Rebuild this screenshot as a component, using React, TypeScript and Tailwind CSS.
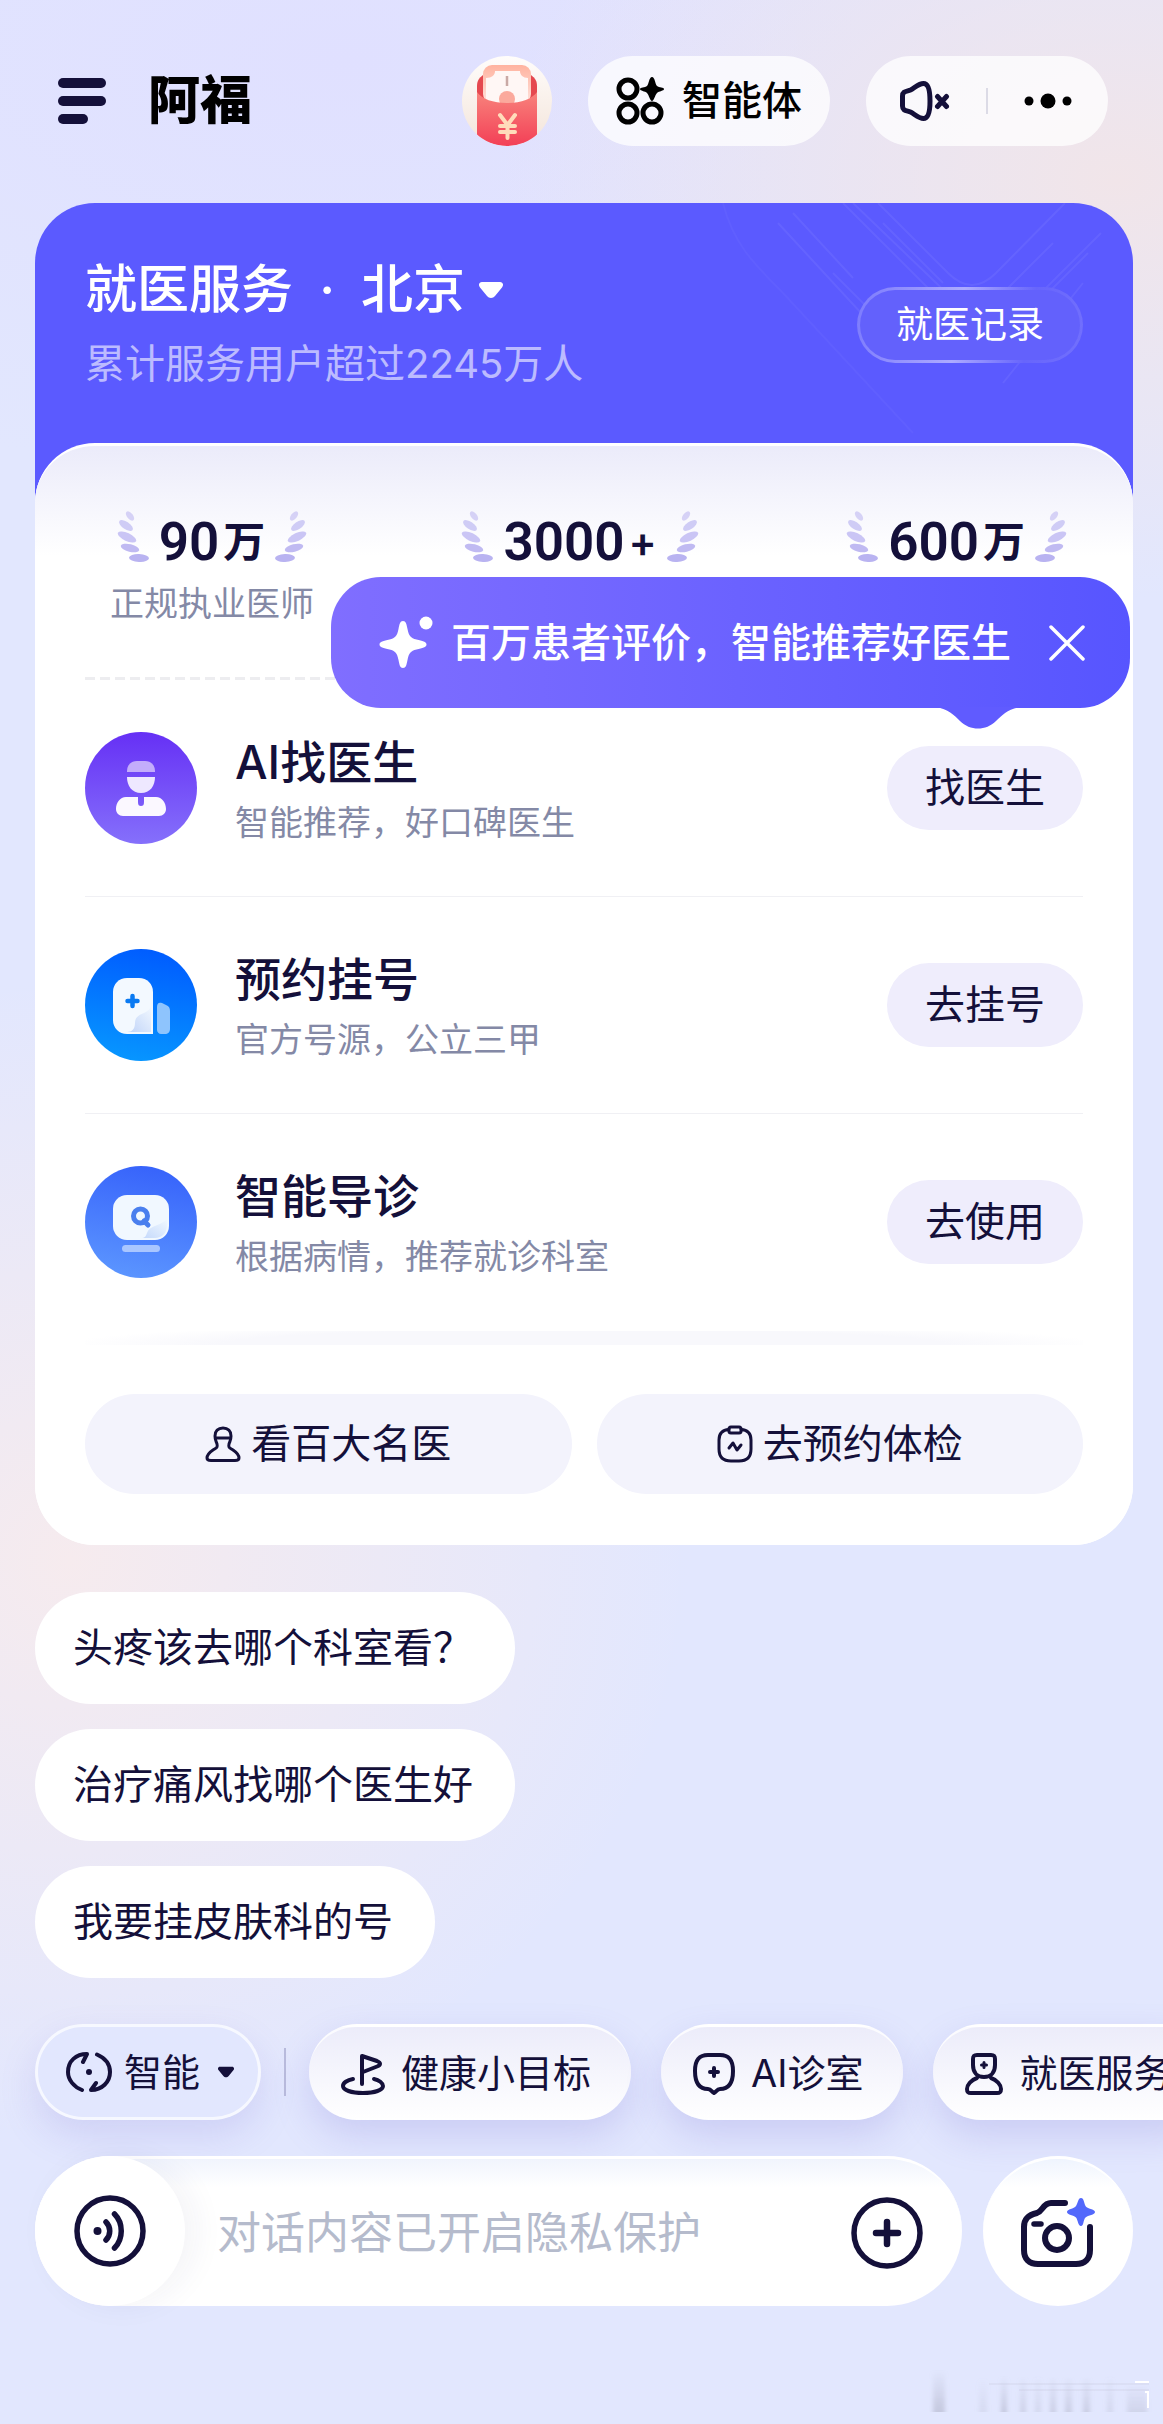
import React, { useState } from 'react';

interface Stat {
  value: string;
  unit: string;
  label?: string;
}

interface Service {
  title: string;
  desc: string;
  action: string;
  icon: React.ReactNode;
}

const stats: Stat[] = [
  { value: '90', unit: '万', label: '正规执业医师' },
  { value: '3000', unit: '+' },
  { value: '600', unit: '万' },
];

const questions = [
  '头疼该去哪个科室看？',
  '治疗痛风找哪个医生好',
  '我要挂皮肤科的号',
];

const MenuIcon = () => (
  <svg className="w-12 h-[46px]" viewBox="0 0 48 46" fill="#14103a">
    <rect width="48" height="10" rx="5" />
    <rect y="18" width="48" height="10" rx="5" />
    <rect y="36" width="30" height="10" rx="5" />
  </svg>
);

const RedPacketIcon = () => (
  <svg className="w-[90px] h-[90px]" viewBox="0 0 90 90">
    <defs>
      <linearGradient id="packetBg" x1="0" y1="0" x2="0" y2="1">
        <stop offset="0" stopColor="#fffdfb" />
        <stop offset="1" stopColor="#f3e4da" />
      </linearGradient>
      <linearGradient id="packetFront" x1="0" y1="0" x2="0" y2="1">
        <stop offset="0" stopColor="#f8837c" />
        <stop offset="1" stopColor="#f33f56" />
      </linearGradient>
      <linearGradient id="packetNote" x1="0" y1="0" x2="0" y2="1">
        <stop offset="0" stopColor="#ffb39f" />
        <stop offset="1" stopColor="#ffe3dd" />
      </linearGradient>
      <clipPath id="packetClip">
        <circle cx="45" cy="45" r="45" />
      </clipPath>
    </defs>
    <circle cx="45" cy="45" r="45" fill="url(#packetBg)" />
    <g clipPath="url(#packetClip)">
      <path d="M15 30c0-5 2-8 6-11h48c4 3 6 6 6 11v12H15z" fill="#e5484f" />
      <rect x="21" y="9" width="48" height="38" rx="9" fill="url(#packetNote)" />
      <path
        d="M33 15h25c0 4 3 7 8 7v25H24V22c6 0 9-3 9-7z"
        fill="#fff7f5"
      />
      <path d="M45 20v10" stroke="#c9a9a5" strokeWidth="2.5" />
      <circle cx="45" cy="43" r="8" fill="#fba99c" />
      <path
        d="M15 36c5 7 16 11 30 11s25-4 30-11v43c-6 6-16 11-30 11s-24-5-30-11z"
        fill="url(#packetFront)"
      />
      <path
        d="M38 59l7.500 10 7.500-10M45.500 69v13M38 70h15M38 76h15"
        fill="none"
        stroke="#ffdcba"
        strokeWidth="4"
        strokeLinecap="round"
      />
    </g>
  </svg>
);

const AgentIcon = () => (
  <svg className="w-12 h-12" viewBox="0 0 48 48" fill="none">
    <g stroke="#000" strokeWidth="5">
      <circle cx="12" cy="12" r="9" />
      <circle cx="12" cy="36" r="9" />
      <circle cx="36" cy="36" r="9" />
    </g>
    <path
      d="M36 0c3 0 3 7 5 9s7 1 7 3-5 2-7 4-3 8-5 8-3-6-5-8-7-2-7-4 5-1 7-3 2-9 5-9z"
      fill="#000"
    />
  </svg>
);

const MuteIcon = () => (
  <svg
    className="w-[50px] h-10"
    viewBox="0 0 50 40"
    fill="none"
    stroke="#14103a"
    strokeWidth="5"
    strokeLinecap="round"
    strokeLinejoin="round"
  >
    <path d="M2.500 15c0-5 4-4.500 8-6 4-2 8-6.500 13-6.500s6.500 7 6.500 17.500-1.500 17.500-6.500 17.500-9-4.500-13-6.500c-4-1.500-8-1-8-6z" />
    <path d="M37.500 15.500l9 10M46.500 15.500l-9 10" />
  </svg>
);

const MoreIcon = () => (
  <svg className="w-12 h-4" viewBox="0 0 48 16" fill="#000">
    <circle cx="5" cy="8" r="4.500" />
    <circle cx="24" cy="8" r="7.500" />
    <circle cx="43" cy="8" r="4.500" />
  </svg>
);

const Laurel = ({ flip = false }: { flip?: boolean }) => (
  <svg className="w-8 h-[51px] shrink-0" viewBox="0 0 32 51" fill="#b9b3f1">
    <g transform={flip ? 'matrix(-1 0 0 1 32 0)' : undefined}>
      <ellipse cx="13" cy="5" rx="5.500" ry="3" transform="rotate(52 13 5)" opacity=".55" />
      <ellipse cx="9" cy="14.500" rx="8" ry="3.700" transform="rotate(34 9 14.500)" opacity=".65" />
      <ellipse cx="10" cy="26" rx="10" ry="4" transform="rotate(25 10 26)" opacity=".75" />
      <ellipse cx="13" cy="37" rx="9.500" ry="3.800" transform="rotate(14 13 37)" opacity=".9" />
      <ellipse cx="22" cy="47" rx="10" ry="4" transform="rotate(2 22 47)" />
    </g>
  </svg>
);

const SparkleIcon = () => (
  <svg className="w-[54px] h-[56px]" viewBox="0 0 54 56" fill="#fff">
    <path d="M24 6c3 0 3.500 3 4.500 8 1.500 7 3 9 9 10.500 6 1.500 10 2 10 5s-4 3.500-10 5-7.500 3.500-9 10.500c-1 5-1.500 8-4.500 8s-3.500-3-4.500-8c-1.500-7-3-9-9-10.500s-10-2-10-5 4-3.500 10-5 7.500-3.500 9-10.500c1-5 1.500-8 4.500-8z" />
    <circle cx="47" cy="8" r="6.500" />
  </svg>
);

const CloseIcon = () => (
  <svg
    className="w-9 h-9"
    viewBox="0 0 36 36"
    stroke="#fff"
    strokeWidth="3.500"
    strokeLinecap="round"
  >
    <path d="M2 2l32 32M34 2L2 34" />
  </svg>
);

const DoctorIcon = () => (
  <svg className="w-28 h-28 shrink-0" viewBox="0 0 112 112">
    <defs>
      <linearGradient id="doctorBg" x1="0" y1="0" x2="0" y2="1">
        <stop offset="0" stopColor="#6630f5" />
        <stop offset="1" stopColor="#8570fb" />
      </linearGradient>
    </defs>
    <circle cx="56" cy="56" r="56" fill="url(#doctorBg)" />
    <path d="M42 40v-1c0-6 4-10 10-10h8c6 0 10 4 10 10v1z" fill="#c3adfb" />
    <path d="M42 45h28c0 9-5 16-14 16s-14-7-14-16z" fill="#eee8ff" />
    <path
      d="M41 65h12v5c0 3 1 4 3 4s3-1 3-4v-5h12c6 0 10 6 10 12 0 4-3 7-7 7H38c-4 0-7-3-7-7 0-6 4-12 10-12z"
      fill="#fbf8ff"
    />
  </svg>
);

const HospitalIcon = () => (
  <svg className="w-28 h-28 shrink-0" viewBox="0 0 112 112">
    <defs>
      <linearGradient id="hospitalBg" x1="0.600" y1="0" x2="0.400" y2="1">
        <stop offset="0" stopColor="#005cff" />
        <stop offset="1" stopColor="#0796ff" />
      </linearGradient>
      <linearGradient id="hospitalFold" x1="0" y1="1" x2="1" y2="0">
        <stop offset="0" stopColor="#bfd3f8" />
        <stop offset="1" stopColor="#f3f9ff" />
      </linearGradient>
    </defs>
    <circle cx="56" cy="56" r="56" fill="url(#hospitalBg)" />
    <path d="M72 58c0-4 2-5 5-4l4 2c3 1 4 3 4 6v18c0 3-2 5-5 5h-4c-2 0-4-2-4-4z" fill="#8ec4fd" />
    <path d="M28 43c0-8 6-14 14-14h12c8 0 14 6 14 14v42H42c-8 0-14-6-14-14z" fill="#f3f9ff" />
    <path d="M50 74c0-6 4-8 9-10 4-2 7-4 7-9v28H42c5 0 8-3 8-9z" fill="url(#hospitalFold)" />
    <path d="M47.500 47v10M42.500 52h10" stroke="#0a7af2" strokeWidth="4.500" strokeLinecap="round" />
  </svg>
);

const TriageIcon = () => (
  <svg className="w-28 h-28 shrink-0" viewBox="0 0 112 112">
    <defs>
      <linearGradient id="triageBg" x1="0.600" y1="0" x2="0.400" y2="1">
        <stop offset="0" stopColor="#3763fb" />
        <stop offset="1" stopColor="#5b95ff" />
      </linearGradient>
      <linearGradient id="triageFold" x1="0" y1="1" x2="1" y2="0">
        <stop offset="0" stopColor="#c3d8fb" />
        <stop offset="1" stopColor="#f1f8ff" />
      </linearGradient>
    </defs>
    <circle cx="56" cy="56" r="56" fill="url(#triageBg)" />
    <rect x="28" y="29" width="56" height="45" rx="14" fill="#f1f8ff" />
    <path d="M62 67c2-8 14-7 20-14v6c0 8-5 13-12 13H56c4 0 5-2 6-5z" fill="url(#triageFold)" />
    <circle cx="55.500" cy="50" r="7" fill="none" stroke="#4a7fee" strokeWidth="5" />
    <path d="M59 55l4 4" stroke="#4a7fee" strokeWidth="5" strokeLinecap="round" />
    <rect x="37" y="79" width="38" height="7" rx="3.500" fill="#a9c6ff" />
  </svg>
);

const services: Service[] = [
  { title: 'AI找医生', desc: '智能推荐，好口碑医生', action: '找医生', icon: <DoctorIcon /> },
  { title: '预约挂号', desc: '官方号源，公立三甲', action: '去挂号', icon: <HospitalIcon /> },
  { title: '智能导诊', desc: '根据病情，推荐就诊科室', action: '去使用', icon: <TriageIcon /> },
];

const FamousDoctorIcon = () => (
  <svg
    className="w-9 h-9"
    viewBox="0 0 36 36"
    fill="none"
    stroke="#14103a"
    strokeWidth="3"
    strokeLinejoin="round"
  >
    <path d="M10 10c0-5 3-8 8-8s8 3 8 8c0 4-1 5-2 8-1 4 1 4 4 6s6 5 6 8c0 2-2 2.500-4 2.500H6c-2 0-4-.5-4-2.500 0-3 3-6 6-8s5-2 4-6c-1-3-2-4-2-8zM10 12h16" />
  </svg>
);

const CheckupIcon = () => (
  <svg
    className="w-9 h-[38px]"
    viewBox="0 0 36 38"
    fill="none"
    stroke="#14103a"
    strokeWidth="3"
    strokeLinecap="round"
    strokeLinejoin="round"
  >
    <path d="M12 4.500C5 5 2 9 2 15v9c0 8 4 12 12 12h8c8 0 12-4 12-12v-9c0-6-3-10-10-10.500" />
    <path d="M14 2h8c3 0 3 6 0 6h-8c-3 0-3-6 0-6z" />
    <path d="M12 23l4-5 4 7 4-5" />
  </svg>
);

const SmartIcon = () => (
  <svg
    className="w-[46px] h-10"
    viewBox="0 0 46 40"
    fill="none"
    stroke="#14103a"
    strokeWidth="4"
    strokeLinecap="round"
    strokeLinejoin="round"
  >
    <path d="M16 38C8 35 2 28 2 20 2 9 10 2 21 2l-4 8" />
    <path d="M31 2.500C39 6 44 12 44 20c0 10-8 18-19 18l5-7" />
    <circle cx="23" cy="20" r="3" fill="#14103a" stroke="none" />
  </svg>
);

const GoalIcon = () => (
  <svg
    className="w-11 h-[42px]"
    viewBox="0 0 44 42"
    fill="none"
    stroke="#14103a"
    strokeWidth="4"
    strokeLinecap="round"
    strokeLinejoin="round"
  >
    <path d="M21 31V3l15 5c4 1.500 4 4 0 5.500L22 19" />
    <path d="M12 26c-6 1-10 4-10 7 0 4 8 7 20 7s20-3 20-7c0-3-4-6-9-7" />
  </svg>
);

const ClinicIcon = () => (
  <svg
    className="w-[42px] h-[42px]"
    viewBox="0 0 42 42"
    fill="none"
    stroke="#14103a"
    strokeWidth="4"
    strokeLinecap="round"
    strokeLinejoin="round"
  >
    <path d="M2 18C2 7 6 2 15 2h12c9 0 13 5 13 16s-4 18-13 18c-3 0-4 3-6 4-2-1-3-4-6-4C6 36 2 29 2 18z" />
    <path d="M21 15v8M17 19h8" />
  </svg>
);

const MedicalIcon = () => (
  <svg
    className="w-[38px] h-[42px]"
    viewBox="0 0 38 42"
    fill="none"
    stroke="#14103a"
    strokeWidth="4"
    strokeLinecap="round"
    strokeLinejoin="round"
  >
    <path d="M12 2h14c3 0 4 1 4 4v6c0 7-4 12-11 12S8 19 8 12V6c0-3 1-4 4-4z" />
    <path d="M12 25C6 27 2 32 2 36c0 3 1 4 4 4h26c3 0 4-1 4-4 0-4-4-9-10-11" />
    <path d="M19 9.500v5M16.500 12h5" strokeWidth="3" />
  </svg>
);

const VoiceIcon = () => (
  <svg
    className="w-[72px] h-[72px]"
    viewBox="0 0 72 72"
    fill="none"
    stroke="#14103a"
    strokeWidth="5.500"
    strokeLinecap="round"
  >
    <circle cx="36" cy="36" r="33" />
    <circle cx="23.500" cy="36" r="4" fill="#14103a" stroke="none" />
    <path d="M32 27c5 5 5 13 0 18M40.500 19c9 9 9 25 0 34" />
  </svg>
);

const PlusIcon = () => (
  <svg
    className="w-[72px] h-[72px]"
    viewBox="0 0 72 72"
    fill="none"
    stroke="#14103a"
    strokeLinecap="round"
  >
    <circle cx="36" cy="36" r="33" strokeWidth="5.500" />
    <path d="M36 25v22M25 36h22" strokeWidth="6.500" />
  </svg>
);

const CameraIcon = () => (
  <svg
    className="w-[74px] h-[70px]"
    viewBox="0 0 74 70"
    fill="none"
    stroke="#14103a"
    strokeWidth="6"
    strokeLinecap="round"
    strokeLinejoin="round"
  >
    <path d="M44 5H30c-8 0-8 8-14 10C7 17 3 21 3 29v23c0 9 5 14 14 14h38c9 0 14-5 14-14V29" />
    <path d="M13 26h7" strokeWidth="5.500" />
    <circle cx="36" cy="40" r="12" />
    <path
      d="M60 0c3 0 3 5 4.500 8s9.500 3 9.500 6-7 3-9.500 5.500S63 28 60 28s-3-6-5-8.500S46 17 46 14s7-3 9-6 2-8 5-8z"
      fill="#5368fb"
      stroke="none"
    />
  </svg>
);

const CaretIcon = ({ className }: { className: string }) => (
  <svg className={className} viewBox="0 0 24 16" fill="currentColor">
    <path d="M3 0h18c3 0 4 3 2 5.500l-7 8.500c-2 2.500-6 2.500-8 0L1 5.500C-1 3 0 0 3 0z" />
  </svg>
);

const shortcuts = [
  { label: '健康小目标', icon: <GoalIcon /> },
  { label: 'AI诊室', icon: <ClinicIcon /> },
  { label: '就医服务', icon: <MedicalIcon /> },
];

const App: React.FC = () => {
  const [tipOpen, setTipOpen] = useState(true);
  const [message, setMessage] = useState('');

  return (
    <div className="relative min-h-screen overflow-x-clip pt-14 pb-[118px] text-[#14103a] font-['Inter','Noto_Sans_CJK_SC',sans-serif] bg-[#e2e7fe] bg-[radial-gradient(620px_420px_at_96%_180px,#f1e5e9,transparent),radial-gradient(620px_580px_at_70px_1560px,#f6ebee,transparent),radial-gradient(900px_420px_at_30%_60px,#e0e0ff,transparent)]">
      {/* 顶部导航 */}
      <header className="flex items-center pl-[58px] pr-[55px]">
        <button aria-label="菜单">
          <MenuIcon />
        </button>
        <h1 className="ml-[42px] text-[52px] leading-[60px] font-black text-black">
          阿福
        </h1>
        <div className="ml-auto flex items-center gap-9">
          <button aria-label="红包">
            <RedPacketIcon />
          </button>
          <button className="flex items-center h-[90px] px-7 gap-[18px] rounded-full bg-white/75 text-[40px] font-medium text-black">
            <AgentIcon />
            智能体
          </button>
          <div className="flex items-center h-[90px] w-[242px] pl-[34px] pr-9 justify-between rounded-full bg-white/75">
            <button aria-label="静音">
              <MuteIcon />
            </button>
            <span className="w-[2px] h-[26px] bg-[#dcdbe6]" />
            <button aria-label="更多">
              <MoreIcon />
            </button>
          </div>
        </div>
      </header>

      <main className="pl-[35px] pr-[30px]">
        {/* 就医服务卡片 */}
        <section className="relative mt-[57px] rounded-t-[60px] bg-[linear-gradient(#5b5aff_400px,transparent_400px)]">
          <svg
            className="absolute top-0 right-[30px] w-[400px] h-[241px]"
            viewBox="0 0 400 241"
            fill="none"
            stroke="#fff"
            strokeOpacity=".06"
            strokeWidth="2"
          >
            <path d="M20 0c10 40 30 60 60 90l130 140" strokeOpacity=".03" />
            <path d="M75 20l120 130M90 10l60 65M140 0l120 120M150 0l130 125M175 0l70 70c16 16 32 16 48 0L362 0" />
            <path d="M130 70l90 90M350 40l-90 90M398 30l-110 110M380 80L300 180M180 20l60 60M385 50l-60 60" />
          </svg>
          <div className="relative flex items-center justify-between px-[50px] pt-[59px] pb-[55px] text-white">
            <div>
              <button className="flex items-center text-[52px] leading-[56px] font-medium">
                <span>就医服务</span>
                <span className="w-[68px] text-center">·</span>
                <span>北京</span>
                <CaretIcon className="ml-[14px] w-6 h-4" />
              </button>
              <p className="mt-[22px] text-[40px] leading-[48px] text-white/60">
                累计服务用户超过2245万人
              </p>
            </div>
            <button className="h-[76px] px-9 rounded-full border-[3px] border-transparent text-[37px] leading-[44px] [background:linear-gradient(#6361fc,#6361fc)_padding-box,linear-gradient(100deg,#7b7afd,#adabff_45%,#6765fc_75%,#7270fd)_border-box]">
              就医记录
            </button>
          </div>

          <div className="relative rounded-[60px] border-t-[3px] border-white bg-white bg-[linear-gradient(#ebebfa,#ffffff_110px)] px-[50px] pt-[64px] pb-[51px]">
            <div className="flex items-start justify-between pl-[25px] pr-4 pb-[53px]">
              {stats.map((stat) => (
                <div key={stat.value} className="flex flex-col items-center">
                  <div className="flex items-end h-[52px]">
                    <Laurel />
                    <span className="ml-[10px] font-[Roboto] text-[53px] leading-[40px] font-semibold">
                      {stat.value}
                    </span>
                    <span className="ml-1 mr-[10px] text-[42px] leading-[40px] font-semibold">
                      {stat.unit}
                    </span>
                    <Laurel flip />
                  </div>
                  {stat.label && (
                    <p className="mt-[22px] text-[34px] leading-[40px] text-[#8489a6]">
                      {stat.label}
                    </p>
                  )}
                </div>
              ))}
            </div>
            <div className="h-[3px] bg-[repeating-linear-gradient(90deg,#ededf0_0_10px,transparent_10px_15px)]" />

            {/* 推荐提示气泡 */}
            {tipOpen && (
              <div className="absolute z-10 top-[131px] right-[3px] flex items-center h-[131px] pl-12 pr-[45px] rounded-[50px] bg-linear-to-r from-[#806eff] to-[#5755ff] text-white whitespace-nowrap">
                <SparkleIcon />
                <p className="ml-[18px] text-[40px] font-medium">
                  百万患者评价，智能推荐好医生
                </p>
                <button
                  className="ml-[38px]"
                  aria-label="关闭"
                  onClick={() => setTipOpen(false)}
                >
                  <CloseIcon />
                </button>
                <svg
                  className="absolute top-[130px] right-[110px] w-[84px] h-[22px]"
                  viewBox="0 0 84 22"
                  fill="#605bff"
                >
                  <path d="M0 0h84c-12 2-18 8-24 14-10 10-26 10-36 0C18 8 12 2 0 0z" />
                </svg>
              </div>
            )}

            {/* 服务列表 */}
            <ul>
              {services.map((service) => (
                <li
                  key={service.title}
                  className="flex items-center h-[217px] border-b border-[#f0f0f4] last:border-transparent"
                >
                  {service.icon}
                  <div className="ml-[38px] flex-1 pt-1.5">
                    <h3 className="text-[46px] leading-[56px] font-medium">
                      {service.title}
                    </h3>
                    <p className="mt-2 text-[34px] leading-[50px] text-[#8489a6]">
                      {service.desc}
                    </p>
                  </div>
                  <button className="h-[84px] px-[38px] rounded-full bg-[#efedfc] text-[40px]">
                    {service.action}
                  </button>
                </li>
              ))}
            </ul>
            <div className="h-[14px] bg-[radial-gradient(52%_160%_at_50%_100%,#f8f8fc_70%,#ffffff)]" />

            <div className="mt-[49px] grid grid-cols-2 gap-[25px] text-[40px]">
              <button className="flex items-center justify-center gap-[10px] h-[100px] rounded-full bg-[#f3f3fc]">
                <FamousDoctorIcon />
                看百大名医
              </button>
              <button className="flex items-center justify-center gap-[10px] h-[100px] rounded-full bg-[#f3f3fc]">
                <CheckupIcon />
                去预约体检
              </button>
            </div>
          </div>
        </section>

        {/* 推荐问题 */}
        <div className="mt-[47px] flex flex-col items-start gap-[25px]">
          {questions.map((q) => (
            <button
              key={q}
              className="h-28 pl-[38px] pr-[42px] rounded-full bg-white text-[40px]"
            >
              {q}
            </button>
          ))}
        </div>
      </main>

      {/* 快捷入口 */}
      <nav className="mt-[46px] pl-[35px] flex items-center text-[38px] whitespace-nowrap">
        <button className="flex items-center shrink-0 h-24 pl-7 pr-6 rounded-full border-[3px] border-white/70 bg-[#e2e7fe] shadow-[0_16px_36px_rgba(120,110,210,0.18)]">
          <SmartIcon />
          <span className="ml-3">智能</span>
          <CaretIcon className="ml-[18px] w-4 h-3" />
        </button>
        <span className="mx-[23px] w-[2px] h-12 shrink-0 bg-[#b9bbdc]" />
        <div className="flex gap-[30px]">
          {shortcuts.map((item) => (
            <button
              key={item.label}
              className="flex items-center gap-4 shrink-0 h-24 pl-8 pr-10 rounded-full border-t-[3px] border-white/80 bg-linear-to-b from-[#ececfa] to-white shadow-[0_16px_36px_rgba(120,110,210,0.22)]"
            >
              {item.icon}
              {item.label}
            </button>
          ))}
        </div>
      </nav>

      {/* 输入区 */}
      <footer className="relative mt-9 pl-[35px] pr-[30px] flex items-center gap-[21px]">
        <div className="flex-1 min-w-0 flex items-center h-[150px] pr-[39px] rounded-full border-t-[3px] border-white bg-[linear-gradient(#f1f4fd,#ffffff_28px)]">
          <button
            aria-label="语音"
            className="shrink-0 -mt-[3px] flex items-center justify-center w-[150px] h-[150px] rounded-full bg-white shadow-[12px_0_30px_rgba(40,40,90,0.05)]"
          >
            <VoiceIcon />
          </button>
          <input
            className="ml-8 min-w-0 flex-1 h-20 bg-transparent text-[44px] outline-none placeholder:text-[#b5bbcc]"
            aria-label="对话内容"
            placeholder="对话内容已开启隐私保护"
            value={message}
            onChange={(e) => setMessage(e.target.value)}
          />
          <button aria-label="添加" className="shrink-0">
            <PlusIcon />
          </button>
        </div>
        <button
          aria-label="拍照"
          className="shrink-0 flex items-center justify-center w-[150px] h-[150px] rounded-full border-t-[3px] border-white bg-[linear-gradient(#eff4fe,#ffffff_28px)]"
        >
          <CameraIcon />
        </button>
      </footer>

      <svg
        className="absolute right-2 bottom-3 w-[226px] h-[42px]"
        viewBox="0 0 226 42"
        fill="none"
      >
        <defs>
          <linearGradient id="smear" x1="0" y1="0" x2="0" y2="1">
            <stop offset="0" stopColor="#a9abc0" stopOpacity="0" />
            <stop offset="1" stopColor="#a9abc0" stopOpacity=".5" />
          </linearGradient>
          <filter id="smearSoft">
            <feGaussianBlur stdDeviation="2 0" />
          </filter>
        </defs>
        <g fill="url(#smear)" filter="url(#smearSoft)">
          <rect x="4" width="12" height="42" />
          <rect x="50" y="8" width="8" height="34" opacity=".4" />
          <rect x="72" y="6" width="6" height="36" />
          <rect x="91" y="6" width="6" height="36" opacity=".7" />
          <rect x="106" y="6" width="6" height="36" opacity=".5" />
          <rect x="121" y="6" width="6" height="36" opacity=".8" />
          <rect x="136" y="6" width="7" height="36" opacity=".8" />
          <rect x="154" y="6" width="7" height="36" opacity=".8" />
          <rect x="178" y="6" width="6" height="36" opacity=".5" />
          <rect x="198" y="14" width="20" height="28" opacity=".6" />
        </g>
        <path d="M60 14h160M90 20h130" stroke="#b9bacb" strokeOpacity=".35" />
        <path d="M206 12h14M216 22h3v16" stroke="#fff" strokeWidth="2" />
      </svg>
    </div>
  );
};

export default App;
